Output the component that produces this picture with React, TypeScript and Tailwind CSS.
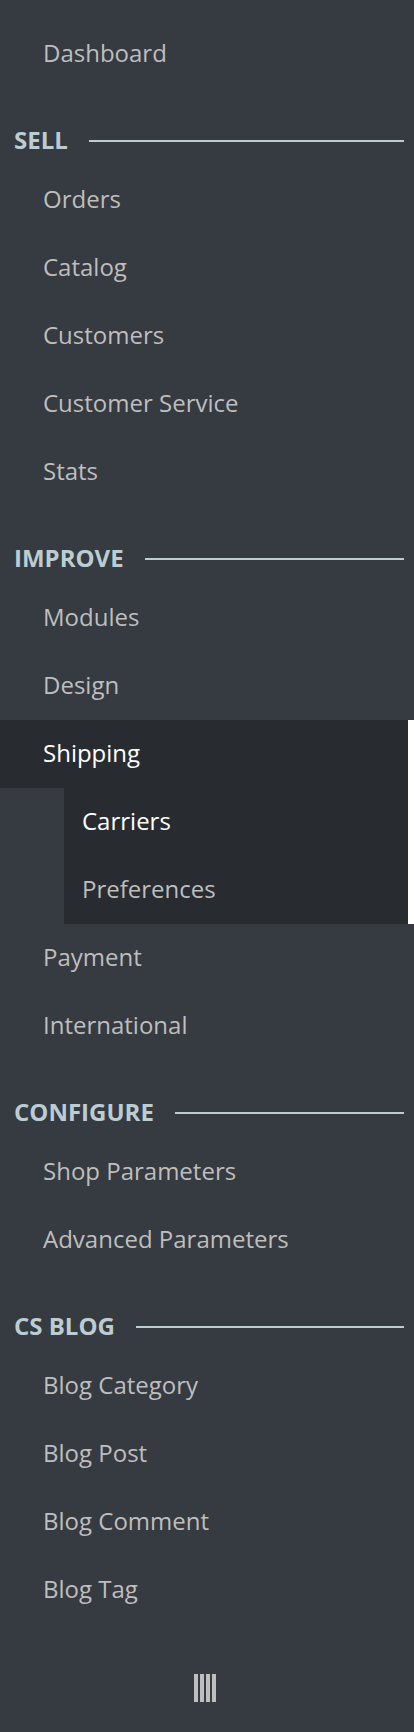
import React from "react";

type Section = {
  title?: string;
  items: string[];
};

const sections: Section[] = [
  { items: ["Dashboard"] },
  {
    title: "SELL",
    items: ["Orders", "Catalog", "Customers", "Customer Service", "Stats"],
  },
  {
    title: "IMPROVE",
    items: ["Modules", "Design", "Shipping", "Payment", "International"],
  },
  { title: "CONFIGURE", items: ["Shop Parameters", "Advanced Parameters"] },
  {
    title: "CS BLOG",
    items: ["Blog Category", "Blog Post", "Blog Comment", "Blog Tag"],
  },
];

const shippingChildren = ["Carriers", "Preferences"];

function SectionTitle({ title }: { title: string }) {
  return (
    <div className="pt-[40px] pb-[14px]">
      <div className="flex h-[24px] items-center pl-[14px] pr-[10px]">
        <span className="text-[24px] font-bold leading-none text-[#bbcdd2]">
          {title}
        </span>
        <div className="ml-[21px] mt-[2px] h-[2px] flex-1 bg-[#bbcdd2]" />
      </div>
    </div>
  );
}

function NavItem({ label }: { label: string }) {
  return (
    <div className="flex h-[68px] items-center pb-[2px] pl-[43px] text-[24px] leading-none text-[#bebebe]">
      {label}
    </div>
  );
}

function ShippingGroup() {
  return (
    <div className="border-r-[6px] border-white">
      {/* active parent */}
      <div className="flex h-[68px] items-center bg-[#282b30] pb-[2px] pl-[43px] text-[24px] leading-none text-white">
        Shipping
      </div>
      {/* submenu */}
      <div className="ml-[64px] bg-[#282b30]">
        {shippingChildren.map((child, i) => (
          <div
            key={child}
            className={`flex h-[68px] items-center pb-[2px] pl-[18px] text-[24px] leading-none ${
              i === 0 ? "text-white" : "text-[#bebebe]"
            }`}
          >
            {child}
          </div>
        ))}
      </div>
    </div>
  );
}

export default function App() {
  return (
    <div
      className="min-h-[1732px] w-full bg-[#363a41] pt-[20px]"
      style={{ fontFamily: '"Open Sans", "Noto Sans", sans-serif' }}
    >
      {sections.map((section, idx) => (
        <div key={idx}>
          {section.title && <SectionTitle title={section.title} />}
          {section.items.map((item) =>
            item === "Shipping" ? (
              <ShippingGroup key={item} />
            ) : (
              <NavItem key={item} label={item} />
            )
          )}
        </div>
      ))}

      {/* collapse toggle */}
      <div className="flex justify-center pt-[50px] pb-[30px] pr-[4px]">
        <div className="flex gap-[2px]">
          <div className="h-[28px] w-[4px] bg-[#bebebe]" />
          <div className="h-[28px] w-[4px] bg-[#bebebe]" />
          <div className="h-[28px] w-[4px] bg-[#bebebe]" />
          <div className="h-[28px] w-[4px] bg-[#bebebe]" />
        </div>
      </div>
    </div>
  );
}
